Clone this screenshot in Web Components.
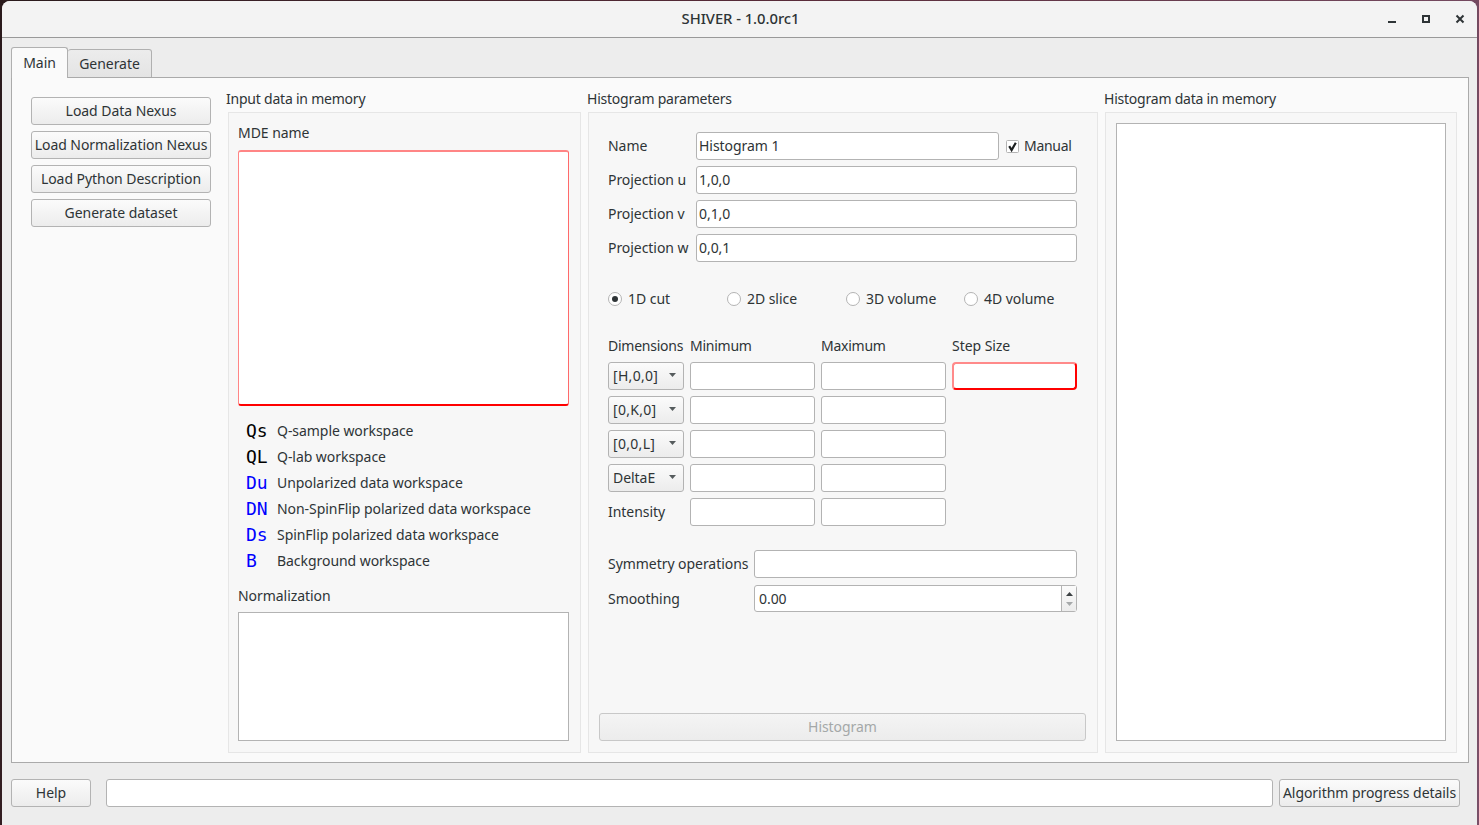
<!DOCTYPE html>
<html>
<head>
<meta charset="utf-8">
<title>SHIVER</title>
<style>
    html, body { margin: 0; height: 100%; overflow: hidden; }
    body {
        background: linear-gradient(100deg, #2a1a1c, #5a2c3a 50%, #7a5068);
        font: 14px "Noto Sans", sans-serif;
        letter-spacing: -0.05px;
        color: #2e3436;
    }
</style>
</head>
<body>
<shiver-window title-text="SHIVER - 1.0.0rc1">
    <main-tabs>
        <div class="cols" style="display:flex;height:100%">
            <div style="width:180px;margin:6px 17px 0 0;display:flex;flex-direction:column;gap:6px">
                <q-button>Load Data Nexus</q-button>
                <q-button>Load Normalization Nexus</q-button>
                <q-button>Load Python Description</q-button>
                <q-button>Generate dataset</q-button>
            </div>

            <q-group title-text="Input data in memory" shift="-2" style="width:353px;margin-right:7px">
                <div style="display:flex;flex-direction:column;height:100%;margin:0 1px 0 -1px">
                    <q-label>MDE name</q-label>
                    <q-list invalid style="height:256px;margin-top:7px"></q-list>
                    <div style="margin-top:12px">
                        <ws-legend code="Qs">Q-sample workspace</ws-legend>
                        <ws-legend code="QL">Q-lab workspace</ws-legend>
                        <ws-legend code="Du" blue>Unpolarized data workspace</ws-legend>
                        <ws-legend code="DN" blue>Non-SpinFlip polarized data workspace</ws-legend>
                        <ws-legend code="Ds" blue>SpinFlip polarized data workspace</ws-legend>
                        <ws-legend code="B" blue>Background workspace</ws-legend>
                    </div>
                    <q-label style="margin:12px 0 6px">Normalization</q-label>
                    <q-list style="flex:1"></q-list>
                </div>
            </q-group>

            <q-group title-text="Histogram parameters" shift="-1" style="width:510px;margin-right:7px">
                <histogram-form></histogram-form>
            </q-group>

            <q-group title-text="Histogram data in memory" shift="-1" style="width:352px">
                <q-list style="height:100%"></q-list>
            </q-group>
        </div>
    </main-tabs>
    <div style="display:flex;gap:6px;margin:16px 9px 0 0">
        <q-button style="width:80px;margin-right:9px">Help</q-button>
        <q-line style="flex:1"></q-line>
        <q-button style="width:181px">Algorithm progress details</q-button>
    </div>
</shiver-window>

<script>
// small helper, every widget is just a template + open shadow root
function widget(name, html, setup) {
    const template = document.createElement('template');
    template.innerHTML = html;
    customElements.define(name, class extends HTMLElement {
        constructor () {
            super();
            this._shadowRoot = this.attachShadow({ mode: 'open' });
            this._shadowRoot.appendChild(template.content.cloneNode(true));
        }
        connectedCallback() {
            if (setup) setup(this, this._shadowRoot);
        }
    });
}

widget('shiver-window', `
    <style>
        :host {
            display: flex;
            flex-direction: column;
            box-sizing: border-box;
            height: 824px;
            margin: 1px 2px 0 2px;
            background: #ededed;
            border-radius: 8px 8px 0 0;
            overflow: hidden;
        }
        .bar {
            height: 37px;
            flex: none;
            box-sizing: border-box;
            padding-bottom: 3px;
            display: grid;
            grid-template-columns: 1fr auto 1fr;
            align-items: center;
            background: #f3f3f3;
            border-bottom: 1px solid #999;
        }
        .name { font-weight: 500; font-size: 14.8px; color: #2e3436; padding-left: 2px; }
        .ctl { display: flex; justify-content: flex-end; gap: 20px; padding: 4px 9px 0 0; }
        .ctl svg { display: block; width: 14px; height: 14px; stroke: #2e3436; fill: none; }
        .body { flex: 1; display: flex; flex-direction: column; padding: 9px 8px 18px 9px; min-height: 0; }
    </style>
    <div class="bar">
        <span></span>
        <span class="name"></span>
        <span class="ctl">
            <svg viewBox="0 0 14 14"><path d="M2 9h8" stroke-width="2"/></svg>
            <svg viewBox="0 0 14 14"><rect x="3" y="3" width="6" height="6" stroke-width="2"/></svg>
            <svg viewBox="0 0 14 14"><path d="M2.5 2.5l7 7M9.5 2.5l-7 7" stroke-width="2"/></svg>
        </span>
    </div>
    <div class="body"><slot></slot></div>
`, (el, root) => {
    root.querySelector('.name').textContent = el.getAttribute('title-text');
});

widget('main-tabs', `
    <style>
        :host { display: flex; flex-direction: column; flex: 1; min-height: 0; }
        .tabs { display: flex; align-items: flex-end; height: 31px; flex: none; margin-bottom: -1px; }
        .tab {
            box-sizing: border-box;
            border: 1px solid #b0b0b0;
            border-radius: 3px 3px 0 0;
            text-align: center;
        }
        .on {
            width: 57px; height: 31px; line-height: 29px;
            background: #fafafa; border-bottom: 0;
            position: relative; z-index: 1;
        }
        .off {
            width: 84px; height: 29px; line-height: 28px; margin-left: 0;
            background: linear-gradient(#ececec, #e4e4e4); border-left: 0;
        }
        .pane {
            flex: 1;
            min-height: 0;
            background: #fafafa;
            border: 1px solid #aaa;
            padding: 13px 11px 9px 19px;
        }
    </style>
    <div class="tabs"><div class="tab on">Main</div><div class="tab off">Generate</div></div>
    <div class="pane"><slot></slot></div>
`);

widget('q-button', `
    <style>
        :host {
            display: block;
            box-sizing: border-box;
            height: 28px;
            line-height: 26px;
            border: 1px solid #b3b3b3;
            border-radius: 3px;
            background: linear-gradient(#fbfbfb, #ececec);
            text-align: center;
            white-space: nowrap;
            color: #2e3436;
        }
        :host([disabled]) { color: #a4a8a8; border-color: #c8c8c8; background: linear-gradient(#f4f4f4, #ececec); }
    </style>
    <slot></slot>
`);

widget('q-label', `
    <style>:host { display: block; height: 20px; line-height: 20px; white-space: nowrap; }</style>
    <slot></slot>
`);

widget('q-line', `
    <style>
        :host {
            display: block;
            box-sizing: border-box;
            height: 28px;
            line-height: 26px;
            padding-left: 2px;
            background: #fff;
            border: 1px solid #b3b3b3;
            border-radius: 3px;
            white-space: nowrap;
        }
        :host([invalid]) { border-width: 2px; border-color: #ff8a8a #f00 #f00 #ff8a8a; border-radius: 4px; }
    </style>
    <slot></slot>
`);

widget('q-list', `
    <style>
        :host { display: block; box-sizing: border-box; background: #fff; border: 1px solid #b3b3b3; }
        :host([invalid]) { border-color: #ff8585 #ff6a6a #f00 #ff8585; border-width: 2px 1px 2px 1px; border-radius: 3px; }
    </style>
    <slot></slot>
`);

widget('q-group', `
    <style>
        :host { display: flex; flex-direction: column; flex: none; }
        .title { height: 21px; line-height: 15px; white-space: nowrap; letter-spacing: -0.22px; }
        .box {
            flex: 1;
            min-height: 0;
            box-sizing: border-box;
            background: #f7f7f7;
            border: 1px solid #e6e6e6;
            padding: 10px 10px 11px 10px;
            letter-spacing: -0.05px;
        }
    </style>
    <div class="title"></div>
    <div class="box"><slot></slot></div>
`, (el, root) => {
    const t = root.querySelector('.title');
    t.textContent = el.getAttribute('title-text');
    t.style.marginLeft = el.getAttribute('shift') + 'px';
});

widget('ws-legend', `
    <style>
        :host { display: flex; height: 26px; line-height: 26px; padding-left: 8px; white-space: nowrap; }
        .code {
            width: 31px;
            font: 18px/26px "DejaVu Sans Mono", monospace;
            letter-spacing: 0;
            color: #000;
        }
        :host([blue]) .code { color: #00f; }
    </style>
    <span class="code"></span><slot></slot>
`, (el, root) => {
    root.querySelector('.code').textContent = el.getAttribute('code');
});

widget('q-check', `
    <style>
        :host { display: inline-flex; align-items: center; gap: 5px; white-space: nowrap; letter-spacing: -0.3px; line-height: 18px; }
        svg { width: 13px; height: 13px; display: block; }
    </style>
    <svg viewBox="0 0 13 13"><rect x=".5" y=".5" width="12" height="12" rx="1" fill="#fff" stroke="#b3b3b3"/><path d="M3.2 6.2l2.4 3.9 4.2-7.4" fill="none" stroke="#1c1f20" stroke-width="2.2"/></svg>
    <slot></slot>
`);

widget('q-radio', `
    <style>
        :host { display: flex; align-items: center; gap: 6px; white-space: nowrap; height: 20px; line-height: 18px; }
        svg { width: 14px; height: 14px; display: block; }
        circle.dot { display: none; }
        :host([checked]) circle.dot { display: block; }
    </style>
    <svg viewBox="0 0 14 14"><circle cx="7" cy="7" r="6.5" fill="#fff" stroke="#b3b3b3"/><circle class="dot" cx="7" cy="7" r="3" fill="#2e3436"/></svg>
    <slot></slot>
`);

widget('q-combo', `
    <style>
        :host {
            display: flex;
            align-items: center;
            justify-content: space-between;
            box-sizing: border-box;
            height: 28px;
            padding: 0 7px 2px 4px;
            border: 1px solid #b3b3b3;
            border-radius: 3px;
            background: linear-gradient(#fbfbfb, #ececec);
            white-space: nowrap;
        }
        svg { width: 7px; height: 4px; display: block; flex: none; }
    </style>
    <slot></slot>
    <svg viewBox="0 0 7 4"><path d="M0 0h7L3.5 4z" fill="#555b5d"/></svg>
`);

widget('q-spin', `
    <style>
        :host {
            display: flex;
            box-sizing: border-box;
            height: 27px;
            background: #fff;
            border: 1px solid #b3b3b3;
            border-radius: 3px;
        }
        .val { flex: 1; line-height: 26px; padding-left: 4px; }
        .btns {
            width: 14px;
            border-left: 1px solid #b3b3b3;
            background: linear-gradient(#fbfbfb, #ececec);
            display: flex;
            flex-direction: column;
            align-items: center;
            justify-content: center;
            gap: 6px;
        }
        svg { width: 7px; height: 4px; display: block; }
    </style>
    <div class="val"><slot></slot></div>
    <div class="btns">
        <svg viewBox="0 0 7 4"><path d="M0 4h7L3.5 0z" fill="#3c4143"/></svg>
        <svg viewBox="0 0 7 4"><path d="M0 0h7L3.5 4z" fill="#a6a9aa"/></svg>
    </div>
`);

widget('histogram-form', `
    <style>
        :host { display: flex; flex-direction: column; height: 100%; }
        .form { padding: 9px 10px 0 9px; flex: 1; display: flex; flex-direction: column; }
        .top { display: grid; grid-template-columns: 88px 303px 1fr; row-gap: 6px; align-items: center; }
        .wide { grid-column: 2 / 4; }
        .top q-check { margin-left: 7px; }
        .radios { display: grid; grid-template-columns: 119px 119px 118px 1fr; margin-top: 27px; }
        .dims {
            display: grid;
            grid-template-columns: 76px 125px 125px 125px;
            column-gap: 6px;
            row-gap: 6px;
            align-items: center;
            margin-top: 27px;
        }
        .dims .hd { letter-spacing: -0.25px; }
        .dims q-combo.br { letter-spacing: .3px; }
        .sym { display: grid; grid-template-columns: 146px 1fr; row-gap: 7px; align-items: center; margin-top: 24px; }
        q-button { margin: auto 1px 0 0; }
    </style>
    <div class="form">
        <div class="top">
            <q-label>Name</q-label><q-line>Histogram 1</q-line><q-check>Manual</q-check>
            <q-label>Projection u</q-label><q-line class="wide">1,0,0</q-line>
            <q-label>Projection v</q-label><q-line class="wide">0,1,0</q-line>
            <q-label>Projection w</q-label><q-line class="wide">0,0,1</q-line>
        </div>
        <div class="radios">
            <q-radio checked>1D cut</q-radio>
            <q-radio>2D slice</q-radio>
            <q-radio>3D volume</q-radio>
            <q-radio>4D volume</q-radio>
        </div>
        <div class="dims">
            <q-label class="hd">Dimensions</q-label><q-label class="hd">Minimum</q-label><q-label class="hd">Maximum</q-label><q-label>Step Size</q-label>
            <q-combo class="br">[H,0,0]</q-combo><q-line></q-line><q-line></q-line><q-line invalid></q-line>
            <q-combo class="br">[0,K,0]</q-combo><q-line></q-line><q-line></q-line><span></span>
            <q-combo class="br">[0,0,L]</q-combo><q-line></q-line><q-line></q-line><span></span>
            <q-combo>DeltaE</q-combo><q-line></q-line><q-line></q-line><span></span>
            <q-label>Intensity</q-label><q-line></q-line><q-line></q-line><span></span>
        </div>
        <div class="sym">
            <q-label>Symmetry operations</q-label><q-line></q-line>
            <q-label>Smoothing</q-label><q-spin>0.00</q-spin>
        </div>
    </div>
    <q-button disabled>Histogram</q-button>
`);
</script>
</body>
</html>
